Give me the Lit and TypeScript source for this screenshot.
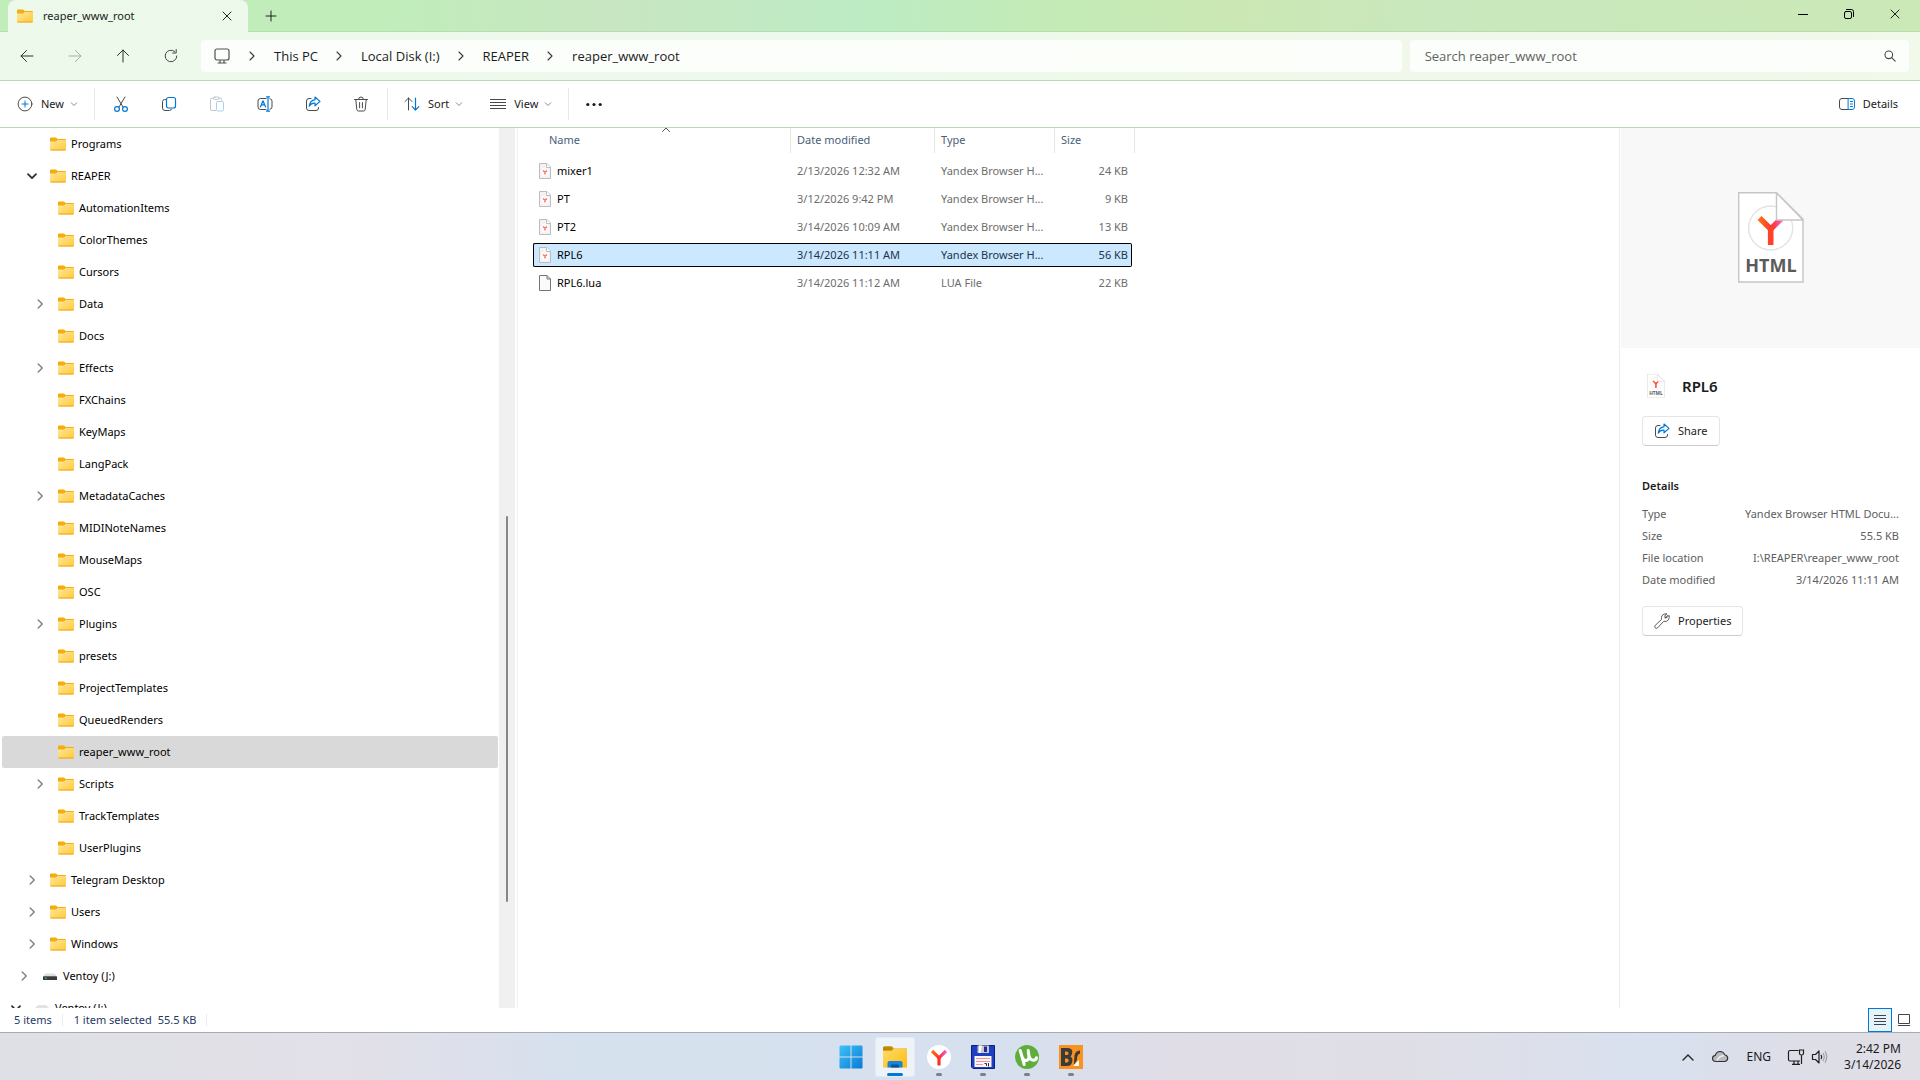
import { LitElement, html, css, svg, nothing } from "lit";
import { customElement, property, state } from "lit/decorators.js";
import { classMap } from "lit/directives/class-map.js";

type TreeNode = { name: string; level: number; toggle?: "open" | "closed"; icon?: "drive" | "usb" };

const TREE: TreeNode[] = [
  { name: "Programs", level: 2 },
  { name: "REAPER", level: 2, toggle: "open" },
  { name: "AutomationItems", level: 3 },
  { name: "ColorThemes", level: 3 },
  { name: "Cursors", level: 3 },
  { name: "Data", level: 3, toggle: "closed" },
  { name: "Docs", level: 3 },
  { name: "Effects", level: 3, toggle: "closed" },
  { name: "FXChains", level: 3 },
  { name: "KeyMaps", level: 3 },
  { name: "LangPack", level: 3 },
  { name: "MetadataCaches", level: 3, toggle: "closed" },
  { name: "MIDINoteNames", level: 3 },
  { name: "MouseMaps", level: 3 },
  { name: "OSC", level: 3 },
  { name: "Plugins", level: 3, toggle: "closed" },
  { name: "presets", level: 3 },
  { name: "ProjectTemplates", level: 3 },
  { name: "QueuedRenders", level: 3 },
  { name: "reaper_www_root", level: 3 },
  { name: "Scripts", level: 3, toggle: "closed" },
  { name: "TrackTemplates", level: 3 },
  { name: "UserPlugins", level: 3 },
  { name: "Telegram Desktop", level: 2, toggle: "closed" },
  { name: "Users", level: 2, toggle: "closed" },
  { name: "Windows", level: 2, toggle: "closed" },
  { name: "Ventoy (J:)", level: 1, toggle: "closed", icon: "drive" },
  { name: "Ventoy (J:)", level: 0, toggle: "open", icon: "usb" },
];

const FILES = [
  { name: "mixer1", date: "2/13/2026 12:32 AM", type: "Yandex Browser H...", size: "24 KB", page: true },
  { name: "PT", date: "3/12/2026 9:42 PM", type: "Yandex Browser H...", size: "9 KB", page: true },
  { name: "PT2", date: "3/14/2026 10:09 AM", type: "Yandex Browser H...", size: "13 KB", page: true },
  { name: "RPL6", date: "3/14/2026 11:11 AM", type: "Yandex Browser H...", size: "56 KB", page: true },
  { name: "RPL6.lua", date: "3/14/2026 11:12 AM", type: "LUA File", size: "22 KB", page: false },
];

const DETAILS = [
  ["Type", "Yandex Browser HTML Docu..."],
  ["Size", "55.5 KB"],
  ["File location", "I:\\REAPER\\reaper_www_root"],
  ["Date modified", "3/14/2026 11:11 AM"],
];

const CRUMBS = ["This PC", "Local Disk (I:)", "REAPER", "reaper_www_root"];

const GREY = "#4a4a4a";
const BLUE = "#0078d4";

const line = (size: number, body: unknown, stroke = GREY, width = 1) => html`<svg
  width=${size} height=${size} viewBox="0 0 ${size} ${size}" fill="none" stroke=${stroke}
  stroke-width=${width} stroke-linecap="round" stroke-linejoin="round" aria-hidden="true">${body}</svg>`;

const icons = {
  folder: html`<svg width="16" height="16" viewBox="0 0 16 16" aria-hidden="true">
    <defs><linearGradient id="f" x1="0" y1="0" x2="1" y2="1">
      <stop offset="0" stop-color="#ffe7a0" /><stop offset="1" stop-color="#ffc937" /></linearGradient></defs>
    <path d="M0 2.6Q0 1.5 1 1.5H6L7.6 3H15Q16 3 16 4V8H0Z" fill="#f4ae0c" />
    <path d="M0 5.4H6.2L7.6 4H16V13.4Q16 14.5 15 14.5H1Q0 14.5 0 13.4Z" fill="url(#f)" />
    <path d="M.5 14H15.5" stroke="#eda71c" /></svg>`,
  drive: html`<svg width="16" height="16" viewBox="0 0 16 16" aria-hidden="true">
    <path d="M3.4 5.5H12.6L15 8.5H1Z" fill="#dedede" /><rect x="1" y="8.3" width="14" height="3.7" rx=".6" fill="#3b3b3b" />
    <rect x="3" y="9.6" width="1.6" height="1.2" fill="#3fd36a" /></svg>`,
  usb: html`<svg width="16" height="16" viewBox="0 0 16 16" aria-hidden="true">
    <path d="M4 5H12L15 8V11H1V8Z" fill="#e2e2e6" /><path d="M1 8.5H15V11H1Z" fill="#777" /></svg>`,
  chevronRight: line(10, svg`<path d="M3.2 1 7.2 5 3.2 9" />`, "#858585", 1.5),
  chevronDown: line(10, svg`<path d="M1 3.2 5 7.2 9 3.2" />`, "#2b2b2b", 1.7),
  crumb: line(10, svg`<path d="M3 1 7 5 3 9" />`, "#3a3a3a", 1.1),
  small: line(8, svg`<path d="M1.3 2.8 4 5.5 6.7 2.8" />`, "#8a8a8a"),
  sortUp: line(8, svg`<path d="M.5 5.5 4 2 7.5 5.5" />`, "#555"),
  close: line(10, svg`<path d="M1 1 9 9M9 1 1 9" />`, "#222"),
  plus: line(12, svg`<path d="M6 1V11M1 6H11" />`, "#222"),
  back: line(16, svg`<path d="M14 8H2M7.5 2.5 2 8 7.5 13.5" />`, "#2e2e2e"),
  forward: line(16, svg`<path d="M2 8H14M8.5 2.5 14 8 8.5 13.5" />`, "#a5afa3"),
  up: line(16, svg`<path d="M8 14V2M2.5 7.5 8 2 13.5 7.5" />`, "#2e2e2e"),
  refresh: line(16, svg`<path d="M13.8 8A5.8 5.8 0 1 1 11.6 3.4M13.2 1.5V5H9.6" />`, "#444"),
  monitor: line(18, svg`<rect x="2" y="2" width="14" height="11" rx="2" /><path d="M7 13.5V15.5M11 13.5V15.5M5 16H13" />`, "#505050", 1.2),
  search: line(14, svg`<circle cx="5.8" cy="5.8" r="3.8" /><path d="M8.7 8.7 12.2 12.2" />`, "#444", 1.1),
  min: line(10, svg`<path d="M0 5.5H10" />`, "#000"),
  restore: line(12, svg`<rect x="1.5" y="3.5" width="7" height="7" rx="1.5" /><path d="M3.5 1.5H8.5Q10.5 1.5 10.5 3.5V8.5" />`, "#000"),
  newItem: line(16, svg`<circle cx="8" cy="8" r="6.9" /><path d="M8 5V11M5 8H11" stroke=${BLUE} />`),
  cut: line(16, svg`<path d="M4 1 10.2 11.3M12 1 5.8 11.3" /><g stroke=${BLUE} stroke-width="1.2"><circle cx="4" cy="13" r="2.4" /><circle cx="12" cy="13" r="2.4" /></g>`),
  copy: line(16, svg`<path d="M4.6 3.6H3.5Q1.5 3.6 1.5 5.6V12Q1.5 14.5 4 14.5H8.5Q10 14.5 10.6 13" /><rect x="5.5" y="1.5" width="9" height="10.5" rx="2" stroke=${BLUE} stroke-width="1.2" />`),
  paste: line(16, svg`<path d="M7 14.5H3Q1.5 14.5 1.5 13V3.5Q1.5 2.2 3 2.2H4.5M10 2.2H11.5Q12.6 2.2 12.6 3.4V4.4" stroke="#c5c5c5" /><rect x="4.5" y="1" width="5.5" height="2.4" rx="1.2" stroke="#c5c5c5" /><rect x="7.5" y="5.5" width="7" height="9.5" rx="1.4" stroke="#a6d2f2" />`),
  rename: line(16, svg`<path d="M9 2.5H3.5Q1 2.5 1 5V11Q1 13.5 3.5 13.5H9M13 2.7Q15 3 15 5V11Q15 13 13 13.3" /><path d="M11 1V15M9.5 .8H12.5M9.5 15.2H12.5M3.4 11 6 4.8 8.6 11M4.4 8.9H7.6" stroke=${BLUE} stroke-width="1.2" />`),
  share: line(16, svg`<path d="M6 2.5H4Q1.5 2.5 1.5 5V12Q1.5 14.5 4 14.5H11Q13.5 14.5 13.5 12V11.5" /><path d="M10 1 15 5.4 10 9.8V7.2Q6.4 6.8 4.2 10.2Q4.8 4.2 10 3.8Z" stroke=${BLUE} stroke-width="1.2" />`),
  trash: line(16, svg`<path d="M1.5 3.5H14.5M5.6 3.3Q5.6 1 8 1Q10.4 1 10.4 3.3M2.8 3.7 3.8 13.4Q4 15 5.4 15H10.6Q12 15 12.2 13.4L13.2 3.7M6.6 6.5V11.8M9.4 6.5V11.8" />`),
  sort: line(16, svg`<path d="M4.5 14V2M1 5.5 4.5 2 8 5.5" /><path d="M11.5 2V14M8.2 10.7 11.5 14 14.8 10.7" stroke=${BLUE} stroke-width="1.2" />`),
  view: line(16, svg`<path d="M0 3.5H16M0 6.5H16M0 9.5H16M0 12.5H16" stroke-linecap="butt" />`),
  more: html`<svg width="16" height="16" viewBox="0 0 16 16" fill="#1b1b1b" aria-hidden="true"><circle cx="1.8" cy="8.5" r="1.6" /><circle cx="8" cy="8.5" r="1.6" /><circle cx="14.2" cy="8.5" r="1.6" /></svg>`,
  pane: line(16, svg`<path d="M9.5 2.5H3Q.5 2.5 .5 5V11Q.5 13.5 3 13.5H9.5" /><path d="M9.5 2.5H13Q15.5 2.5 15.5 5V11Q15.5 13.5 13 13.5H9.5ZM11.5 5.5H13.5M11.5 8H13.5M11.5 10.5H13.5" stroke=${BLUE} />`),
  wrench: line(16, svg`<path d="M13.9 2.3 11.3 4.9 10.9 4.6 11.2 2 13 .9Q9.6 .2 7.9 2.8Q7 4.4 7.6 6.4L1.2 12.4Q.2 13.8 1.3 14.9Q2.5 15.9 3.7 14.8L9.6 8.4Q12.6 9.2 14.4 6.9Q15.8 4.8 15 2.4L13 4.6 11.2 4.9" stroke-width=".9" />`),
  list: line(14, svg`<path d="M1 2.5H13M1 5.5H13M1 8.5H13M1 11.5H13" stroke-linecap="butt" />`, "#444"),
  tiles: line(14, svg`<path d="M1.5 1.5H12.5V10.5H1.5ZM1 12.5H13" stroke-linecap="butt" stroke-linejoin="miter" />`, "#444"),
  doc: html`<svg width="12" height="16" viewBox="0 0 12 16" aria-hidden="true"><path d="M.5 .5H8L11.5 4V15.5H.5Z" fill="#fafafa" stroke="#757575" /><path d="M8 .5V4H11.5" fill="none" stroke="#757575" /></svg>`,
  page: html`<svg width="12" height="16" viewBox="0 0 12 16" aria-hidden="true"><path d="M.5 .5H8L11.5 4V15.5H.5Z" fill="#f4f2f2" stroke="#bdbdbd" /><circle cx="6" cy="9" r="4.2" fill="#fdfbfb" /><path d="M7.500 .5V4.500H11.5" fill="#fff" stroke="#bdbdbd" />
    <path d="M4 7.500 6 9.300 8 7.500M6 9V11.500" fill="none" stroke="#f47a68" stroke-width="1.500" /></svg>`,
  caretUp: line(12, svg`<path d="M1 9 6 4 11 9" />`, "#222", 1.4),
};

const pageArt = (width: number, height: number) => html`<svg width=${width} height=${height} viewBox="0 0 66 91" aria-hidden="true">
  <defs><linearGradient id="y" gradientUnits="userSpaceOnUse" x1="19" y1="0" x2="46" y2="0">
    <stop offset="0" stop-color="#ff7a10" /><stop offset=".5" stop-color="#fb3d2c" /><stop offset=".65" stop-color="#ff3c4c" /><stop offset="1" stop-color="#f46be8" /></linearGradient></defs>
  <path d="M.7 .7H38.5L65 27V90H.7Z" fill="#fff" stroke="#c6c6c6" stroke-width="1.4" />
  <circle cx="32.7" cy="36" r="22" fill="#fff" stroke="#e3e3e3" stroke-width="1.4" />
  <path d="M21.5 26 32.7 37 45 25" fill="none" stroke="url(#y)" stroke-width="5.6" />
  <path d="M32.7 35.5V53" stroke="#ff4228" stroke-width="5.6" />
  <path d="M38.5 1V28H65Z" fill="#fff" stroke="#c6c6c6" stroke-width="1.4" stroke-linejoin="round" />
  <text x="33" y="80" text-anchor="middle" font-family="Open Sans, sans-serif" font-weight="700" font-size="18" fill="#5a5a5a">HTML</text></svg>`;

const apps = {
  windows: html`<svg width="24" height="24" viewBox="0 0 24 24" aria-hidden="true"><defs><linearGradient id="w" x1="0" y1="0" x2="1" y2="1" gradientUnits="objectBoundingBox"><stop offset="0" stop-color="#3cc4f6" /><stop offset="1" stop-color="#0b78d6" /></linearGradient></defs>
    <path d="M1.5 .5H11.5V11.5H.5V1.5Q.5 .5 1.5 .5ZM12.5 .5H22.5Q23.5 .5 23.5 1.5V11.5H12.5ZM.5 12.5H11.5V23.5H1.5Q.5 23.5 .5 22.5ZM12.5 12.5H23.5V22.5Q23.5 23.5 22.5 23.5H12.5Z" fill="url(#w)" /></svg>`,
  explorer: html`<svg width="24" height="24" viewBox="0 0 24 24" aria-hidden="true"><defs><linearGradient id="e" x1="0" y1="0" x2="1" y2="1"><stop offset="0" stop-color="#ffdc6a" /><stop offset="1" stop-color="#fdbb10" /></linearGradient></defs>
    <path d="M0 3Q0 1.5 1.5 1.5H9L11 3.5H24V9H0Z" fill="#e2a20c" /><path d="M0 6H9L11 3.8H22.8Q24 3.8 24 5V22.5H0Z" fill="url(#e)" /><path d="M1.5 1.5H8.5L9.5 3 8.4 5H0V3Q0 1.5 1.5 1.5Z" fill="#b78a08" />
    <path d="M4.5 22.5V18Q4.5 16 6.5 16H17.5Q19.5 16 19.5 18V22.5Z" fill="#1784d8" /><path d="M8 22.5V20.3Q8 19.5 9 19.5H15Q16 19.5 16 20.3V22.5Z" fill="#0a559c" /></svg>`,
  yandex: html`<svg width="24" height="24" viewBox="0 0 24 24" aria-hidden="true"><defs><linearGradient id="b" gradientUnits="userSpaceOnUse" x1="4" y1="0" x2="20" y2="0"><stop offset="0" stop-color="#ff7a10" /><stop offset=".5" stop-color="#fb3030" /><stop offset="1" stop-color="#f55af0" /></linearGradient></defs>
    <circle cx="12" cy="12" r="12" fill="#fff" /><path d="M5 6 12 12.8 19 6" fill="none" stroke="url(#b)" stroke-width="3.2" /><path d="M12 12V20.5" stroke="#fa3328" stroke-width="3.2" /></svg>`,
  floppy: html`<svg width="24" height="24" viewBox="0 0 24 24" aria-hidden="true"><path d="M.5 .5H23.5V23.5H2L.5 22Z" fill="#1d3fc4" stroke="#0d1f7c" /><path d="M6.5 .5H18V8H6.5Z" fill="#c8c8cc" /><path d="M8 .5H11L9.5 8H8Z" fill="#fff" /><rect x="13" y="1.5" width="3" height="5.5" fill="#1a2f94" />
    <rect x="3.5" y="11" width="17" height="11" fill="#fdf5f5" /><path d="M5 13.5H19M5 16.5H19M5 19.5H12" stroke="#e79a9a" /><path d="M13.5 18.5H15.5V21M17.5 18V21.5" stroke="#333" fill="none" /></svg>`,
  torrent: html`<svg width="24" height="24" viewBox="0 0 24 24" aria-hidden="true"><circle cx="12" cy="12" r="12" fill="#5fae3c" /><path d="M5.2 5.5 9.2 19.5M6.7 10.5Q8.2 16.5 12 15.3Q15 14.3 13.2 5.5M13.4 8.5Q14.6 15 18.2 15.3Q21.2 15.2 21.5 12.8" fill="none" stroke="#fff" stroke-width="3" stroke-linecap="round" /></svg>`,
  bome: html`<svg width="24" height="24" viewBox="0 0 24 24" aria-hidden="true"><rect width="24" height="24" fill="#f7931e" /><path fill-rule="evenodd" d="M2 3H9Q14 3.5 13.2 8Q12.8 10.5 11.5 11.5Q14 13 13.3 16.5Q12.5 21 8 21H2ZM6 6.5V10H8.2Q9.5 9.7 9.5 8.2Q9.4 6.5 8 6.5ZM6 13.5V17.5H8Q9.600 17.3 9.7 15.5Q9.6 13.5 8 13.5Z" fill="#3a3a3a" /><path d="M21 5.5Q16 6 15.5 10.5L14.8 20 18 15Q17.6 9.5 21 8.5Z" fill="#3a3a3a" /><path d="M14 21 20 15V21Z" fill="#fff" /></svg>`,
};

const tray = {
  cloud: html`<svg width="18" height="14" viewBox="0 0 18 14" aria-hidden="true"><path d="M4.8 11.5Q1.5 11.3 1.5 8.2Q1.7 5.7 4.3 5.3Q5.2 1.7 9 1.5Q12.6 1.6 13.7 5Q16.7 5.3 16.7 8.2Q16.5 11.3 13.4 11.5Z" fill="#b9bbbe" stroke="#333" stroke-width="1.2" /><path d="M6 10.500Q8 6 13.5 5.6" fill="none" stroke="#eee" stroke-width="1.5" /></svg>`,
  network: html`<svg width="18" height="18" viewBox="0 0 18 18" fill="none" stroke="#1f1f1f" stroke-width="1.2" aria-hidden="true"><path d="M11.5 2.5H3Q1.5 2.5 1.5 4V11.5Q1.5 13 3 13H13M5 16.3H13M7 13V16.3M11 13V16.3" /><path d="M12.5 2H16.5V5.5Q16.5 7 14.5 7Q12.5 7 12.5 5.5ZM14.5 7V16" /></svg>`,
  sound: html`<svg width="18" height="18" viewBox="0 0 18 18" fill="none" stroke="#1f1f1f" stroke-width="1.2" stroke-linejoin="round" aria-hidden="true"><path d="M1.5 6.5H4.5L8 3V15L4.5 11.5H1.5Z" /><path d="M10 6.8Q11.5 9 10 11.2" /><path d="M12 5Q14.5 9 12 13M14 3.2Q17.5 9 14 14.8" stroke="#a0a0a8" /></svg>`,
};

@customElement("app-root")
export class AppRoot extends LitElement {
  static styles = css`
    :host {
      display: flex; flex-direction: column; height: 100vh; overflow: hidden;
      font: 11px/16px "Noto Sans", "Open Sans", sans-serif; color: #1b1b1b; background: #fff;
    }
  `;
  render() {
    return html`<explorer-header></explorer-header><command-bar></command-bar><explorer-body></explorer-body><status-bar></status-bar><task-bar></task-bar>`;
  }
}

const base = css`
  :host, * { box-sizing: border-box; }
  svg { display: block; flex: none; }
  button { font: inherit; color: inherit; border: 0; background: none; padding: 0; display: flex; align-items: center; justify-content: center; flex: none; }
  a { color: inherit; text-decoration: none; }
`;

@customElement("explorer-header")
export class ExplorerHeader extends LitElement {
  static styles = [base, css`
    :host { display: block; flex: none; background: linear-gradient(90deg, #c1edbb 0, #c1edbb 20%, #c8e6c2 32%, #bdecc4 45%, #c4ebb6 55%, #cbe8b4 64%, #c9e8bd 75%, #cbe9b7 100%); }
    .titlebar { display: flex; height: 32px; padding-left: 8px; box-shadow: inset 0 -1px #b5dcae; }
    .tab { display: flex; align-items: center; width: 240px; padding: 0 16px 0 9px; border-radius: 8px 8px 0 0; background: linear-gradient(#ffffffb3, #ffffffb3), #c1edbb; }
    .tab span { flex: 1; padding-left: 10px; color: #1a1a1a; }
    .add { width: 45px; }
    .window { display: flex; margin-left: auto; padding-right: 2px; }
    .window button { width: 46px; height: 28px; }
    .nav { display: flex; align-items: center; height: 49px; padding: 0 11px 0 3px; border-bottom: 1px solid #b5dcae; background: #ffffffb3; font-family: "Open Sans", sans-serif; font-size: 13px; }
    .nav > button { width: 48px; height: 40px; }
    .address, .search { display: flex; align-items: center; height: 32px; border-radius: 4px; background: #ffffffc8; }
    .address { flex: 1; margin-left: 6px; padding-left: 12px; gap: 16px; }
    .address ol { display: contents; list-style: none; }
    .address li { display: flex; align-items: center; gap: 17px; }
    .search { width: 26.2%; margin-left: 8px; padding: 0 12px 0 15px; }
    .search input { flex: 1; min-width: 0; font: inherit; border: 0; outline: 0; background: none; padding: 0; color: #333; }
    .search input::placeholder { color: #5f635e; opacity: 1; }
  `];
  render() {
    return html`
      <div class="titlebar">
        <div class="tab">${icons.folder}<span>reaper_www_root</span><button aria-label="Close tab">${icons.close}</button></div>
        <button class="add" aria-label="Add new tab">${icons.plus}</button>
        <div class="window">
          <button aria-label="Minimize">${icons.min}</button><button aria-label="Restore">${icons.restore}</button><button aria-label="Close">${icons.close}</button>
        </div>
      </div>
      <nav class="nav">
        <button aria-label="Back">${icons.back}</button><button aria-label="Forward" disabled>${icons.forward}</button>
        <button aria-label="Up">${icons.up}</button><button aria-label="Refresh">${icons.refresh}</button>
        <div class="address">${icons.monitor}<ol>${CRUMBS.map((c) => html`<li>${icons.crumb}<a href="#">${c}</a></li>`)}</ol></div>
        <label class="search"><input type="search" placeholder="Search reaper_www_root" aria-label="Search reaper_www_root" />${icons.search}</label>
      </nav>`;
  }
}

@customElement("command-bar")
export class CommandBar extends LitElement {
  static styles = [base, css`
    :host { display: flex; flex: none; align-items: center; height: 47px; padding: 0 22px 0 17px; border-bottom: 1px solid #b9d8ae; background: #fff; }
    .text { gap: 8px; }
    .text svg:last-child { margin-left: -2px; }
    .tools { display: flex; margin: 0 2px; }
    .tools button { width: 48px; height: 40px; }
    .sep { width: 1px; height: 32px; background: #e8e8e8; }
    .new { padding-right: 16px; }
    .sort { padding: 0 27px 0 16px; }
    .view { padding-right: 16px; }
    .more { padding: 0 17px; }
    .details { margin-left: auto; }
  `];
  render() {
    const tools = [["Cut", icons.cut], ["Copy", icons.copy], ["Paste", icons.paste], ["Rename", icons.rename], ["Share", icons.share], ["Delete", icons.trash]] as const;
    return html`
      <button class="text new">${icons.newItem}New${icons.small}</button>
      <span class="sep"></span>
      <div class="tools">${tools.map(([name, icon]) => html`<button aria-label=${name} ?disabled=${name === "Paste"}>${icon}</button>`)}</div>
      <span class="sep"></span>
      <button class="text sort">${icons.sort}Sort${icons.small}</button>
      <button class="text view">${icons.view}View${icons.small}</button>
      <span class="sep"></span>
      <button class="more" aria-label="See more">${icons.more}</button>
      <button class="text details">${icons.pane}Details</button>`;
  }
}

@customElement("explorer-body")
export class ExplorerBody extends LitElement {
  static styles = [base, css`
    :host { display: flex; flex: 1; min-height: 0; }
    folder-tree { width: 518px; flex: none; }
    file-list { flex: 1; }
    details-pane { width: 301px; flex: none; }
  `];
  render() {
    return html`<folder-tree></folder-tree><file-list></file-list><details-pane></details-pane>`;
  }
}

@customElement("folder-tree")
export class FolderTree extends LitElement {
  @state() private current = "reaper_www_root";
  static styles = [base, css`
    :host { display: flex; overflow: hidden; border-right: 1px solid #f0f0f0; color: #000; }
    ul { flex: 1; margin: 0; padding: 0 1px 0 2px; list-style: none; }
    li { display: flex; align-items: center; height: 32px; border-radius: 2px; }
    .current { background: #d9d9d9; }
    .l0 { padding-left: 9px; } .l1 { padding-left: 17px; } .l2 { padding-left: 25px; } .l3 { padding-left: 33px; }
    .toggle { width: 10px; margin-right: 13px; }
    .name { padding-left: 5px; }
    .bar { width: 16px; margin-right: 2px; padding-top: 388px; background: #f0f0f0; }
    .thumb { width: 2px; height: 386px; margin: 0 auto; border-radius: 1px; background: #868686; }
  `];
  render() {
    return html`<ul>${TREE.map((n) => html`<li class=${classMap({ [`l${n.level}`]: true, current: n.name === this.current })}>
        <span class="toggle">${n.toggle ? (n.toggle === "open" ? icons.chevronDown : icons.chevronRight) : nothing}</span>
        ${n.icon ? icons[n.icon] : icons.folder}<span class="name">${n.name}</span></li>`)}</ul>
      <div class="bar"><div class="thumb"></div></div>`;
  }
}

@customElement("file-list")
export class FileList extends LitElement {
  @property() selected = "RPL6";
  static styles = [base, css`
    :host { display: block; padding-left: 15px; }
    table { width: 602px; table-layout: fixed; border-collapse: separate; border-spacing: 0 4px; margin-top: -4px; }
    .c-name { width: 258px; } .c-date { width: 144px; } .c-type { width: 120px; } .c-size { width: 77px; } .c-end { width: 3px; }
    th { position: relative; height: 27px; padding: 0 0 3px 6px; background: linear-gradient(#e5e5e5, #e5e5e5) right top / 1px 25px no-repeat; text-align: left; font-weight: 400; color: #4c607a; }
    th.name { padding-left: 16px; }
    th svg { position: absolute; left: 50%; top: -2px; }
    td { height: 24px; padding: 0 0 0 6px; border: solid transparent; border-width: 1px 0; color: #6d6d6d; white-space: nowrap; }
    td.name { color: #000; border-left-width: 1px; border-radius: 2px 0 0 2px; padding-left: 5px; }
    td.size { text-align: right; border-right-width: 1px; border-radius: 0 2px 2px 0; padding-right: 3px; }
    .file { display: flex; align-items: center; gap: 6px; }
    .selected td { background: #cce8ff; border-color: #000; color: #23344a; }
    .selected td.name { color: #000; }
  `];
  render() {
    return html`<table>
      <colgroup><col class="c-name" /><col class="c-date" /><col class="c-type" /><col class="c-size" /><col class="c-end" /></colgroup>
      <thead><tr><th class="name">Name${icons.sortUp}</th><th>Date modified</th><th>Type</th><th colspan="2">Size</th></tr></thead>
      <tbody>${FILES.map((f) => html`<tr class=${classMap({ selected: f.name === this.selected })}>
        <td class="name"><span class="file">${f.page ? icons.page : icons.doc}${f.name}</span></td>
        <td>${f.date}</td><td>${f.type}</td><td class="size">${f.size}</td></tr>`)}</tbody></table>`;
  }
}

@customElement("details-pane")
export class DetailsPane extends LitElement {
  static styles = [base, css`
    :host { display: block; border-left: 1px solid #ececec; color: #1b1b1b; }
    .preview { display: flex; align-items: center; justify-content: center; height: 220px; margin-left: 1px; padding-bottom: 1px; background: #f8f8f8; }
    .content { padding: 26px 21px 0 22px; }
    .head { display: flex; align-items: center; gap: 17px; height: 24px; margin-left: 5px; }
    h2 { margin: 0; font-size: 15px; font-weight: 600; }
    .action { height: 30px; gap: 8px; padding: 0 11px; border: 1px solid #e5e5e5; border-bottom-color: #ccc; border-radius: 4px; background: #fff; }
    .share { margin-top: 18px; }
    h3 { margin: 32px 0 9px; font-size: 11px; line-height: 16px; font-weight: 600; }
    dl { margin: 0 0 15px; color: #5e5e5e; }
    .row { display: flex; justify-content: space-between; gap: 16px; line-height: 22px; white-space: nowrap; }
    dd { margin: 0; }
  `];
  render() {
    return html`<div class="preview">${pageArt(66, 91)}</div>
      <div class="content">
        <div class="head">${pageArt(18, 24)}<h2>RPL6</h2></div>
        <button class="action share">${icons.share}Share</button>
        <h3>Details</h3>
        <dl>${DETAILS.map(([k, v]) => html`<div class="row"><dt>${k}</dt><dd>${v}</dd></div>`)}</dl>
        <button class="action">${icons.wrench}Properties</button>
      </div>`;
  }
}

@customElement("status-bar")
export class StatusBar extends LitElement {
  static styles = [base, css`
    :host { display: flex; flex: none; align-items: center; height: 24px; padding: 0 4px 0 14px; background: #fff; color: #1f3864; }
    .items { padding-right: 10px; }
    .picked { display: flex; gap: 6px; padding: 0 10px 0 11px; border: solid #ececec; border-width: 0 1px; line-height: 12px; }
    .views { display: flex; margin-left: auto; }
    .views button { width: 24px; height: 24px; }
    .views .on { border: 1px solid #0078d4; background: #e5f3fb; }
  `];
  render() {
    return html`<span class="items">5 items</span><span class="picked"><span>1 item selected</span><span>55.5 KB</span></span>
      <div class="views"><button class="on" aria-label="Details view">${icons.list}</button><button aria-label="Large icons view">${icons.tiles}</button></div>`;
  }
}

@customElement("task-bar")
export class TaskBar extends LitElement {
  static styles = [base, css`
    :host { display: grid; grid-template-columns: 1fr auto 1fr; flex: none; height: 48px; border-top: 1px solid #a9abb3; background: linear-gradient(90deg, #dfe0e6 0, #e2e0e8 18%, #dce0ec 25%, #d6e1ee 30%, #d6e0ee 52%, #e1dde6 62%, #dfdfe8 75%, #d9e1ef 86%, #dddee8 93%, #e1dfe6 100%); color: #1b1b1b; font-size: 12px; }
    .apps { grid-column: 2; display: flex; align-items: center; gap: 4px; padding-left: 2px; }
    .app { position: relative; width: 40px; height: 40px; border-radius: 4px; }
    .active { background: #eef2f9; box-shadow: inset 0 0 0 1px #e6ebf3; }
    .app::after { content: ""; position: absolute; bottom: 1px; left: 17px; width: 6px; height: 3px; border-radius: 2px; background: #7c7f87; }
    .app.idle::after { display: none; }
    .app.active::after { left: 12px; width: 16px; background: #0078d4; }
    .tray { display: flex; align-items: center; justify-content: flex-end; padding-right: 19px; }
    .caret { margin-right: 17px; } .cloud { margin-right: 17px; } .lang { margin-right: 16px; } .quick { gap: 6px; margin-right: 16px; }
    .clock { width: 56px; text-align: right; white-space: nowrap; display: flex; justify-content: flex-end; }
  `];
  render() {
    const list = [["Start", apps.windows, "idle"], ["File Explorer", apps.explorer, "active"], ["Yandex Browser", apps.yandex, ""], ["File manager", apps.floppy, ""], ["Torrent", apps.torrent, ""], ["Bridge", apps.bome, ""]] as const;
    return html`
      <div class="apps">${list.map(([name, icon, kind]) => html`<button class=${"app " + kind} aria-label=${name}>${icon}</button>`)}</div>
      <div class="tray">
        <button class="caret" aria-label="Show hidden icons">${icons.caretUp}</button>
        <button class="cloud" aria-label="Cloud storage">${tray.cloud}</button>
        <button class="lang">ENG</button>
        <button class="quick" aria-label="Network and sound">${tray.network}${tray.sound}</button>
        <button class="clock"><span>2:42 PM<br />3/14/2026</span></button>
      </div>`;
  }
}
